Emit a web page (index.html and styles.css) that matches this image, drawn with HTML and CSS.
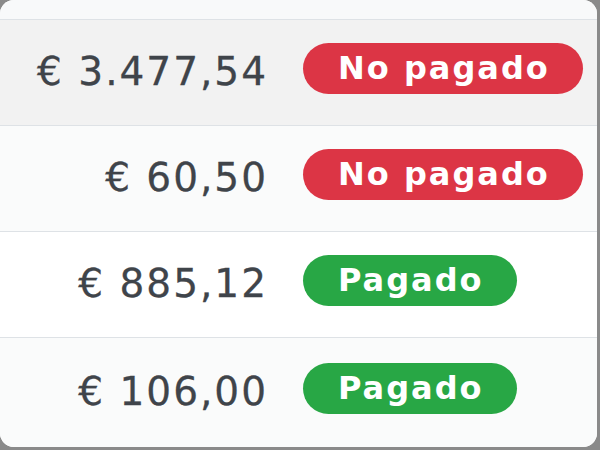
FILE: index.html
```html
<!DOCTYPE html>
<html lang="es">
<head>
<meta charset="utf-8">
<link rel="stylesheet" href="styles.css">
</head>
<body>
<div class="card">
  <div class="top"></div>
  <div class="row hover">
    <div class="amount">€ 3.477,54</div>
    <div class="status"><span class="badge red">No pagado</span></div>
  </div>
  <div class="row alt">
    <div class="amount">€ 60,50</div>
    <div class="status"><span class="badge red">No pagado</span></div>
  </div>
  <div class="row">
    <div class="amount">€ 885,12</div>
    <div class="status"><span class="badge green">Pagado</span></div>
  </div>
  <div class="row alt last">
    <div class="amount">€ 106,00</div>
    <div class="status"><span class="badge green">Pagado</span></div>
  </div>
</div>
</body>
</html>
```
FILE: styles.css
```css
html, body {
  margin: 0;
  padding: 0;
  background: #8a8a8a;
}
body {
  width: 600px;
  height: 450px;
  overflow: hidden;
  font-family: "DejaVu Sans", "Open Sans", sans-serif;
}
.card {
  width: 597px;
  height: 447px;
  background: #ffffff;
  border-radius: 14px;
  overflow: hidden;
  display: flex;
  flex-direction: column;
}
.top {
  height: 19px;
  background: #f8f9fa;
}
.row {
  height: 106px;
  box-sizing: border-box;
  padding-bottom: 9px;
  border-top: 1px solid #dee2e6;
  display: grid;
  grid-template-columns: 268px 1fr;
  align-items: center;
  background: #ffffff;
}
.row.hover { background: #f2f2f2; }
.row.alt { background: #fafbfb; }
.row.last { flex: 1; }
.amount {
  text-align: right;
  font-size: 39px;
  color: #3f444a;
  padding-top: 6px;
  letter-spacing: 2px;
  -webkit-text-stroke: 0.3px #3f444a;
}
.status {
  padding-left: 35px;
}
.badge {
  display: inline-flex;
  align-items: center;
  height: 51px;
  padding: 0 33px 0 35px;
  box-sizing: border-box;
  border-radius: 26px;
  color: #ffffff;
  font-weight: 700;
  font-size: 32px;
  letter-spacing: 2px;
}
.badge.red { background: #dc3545; }
.badge.green { background: #28a745; }
```
